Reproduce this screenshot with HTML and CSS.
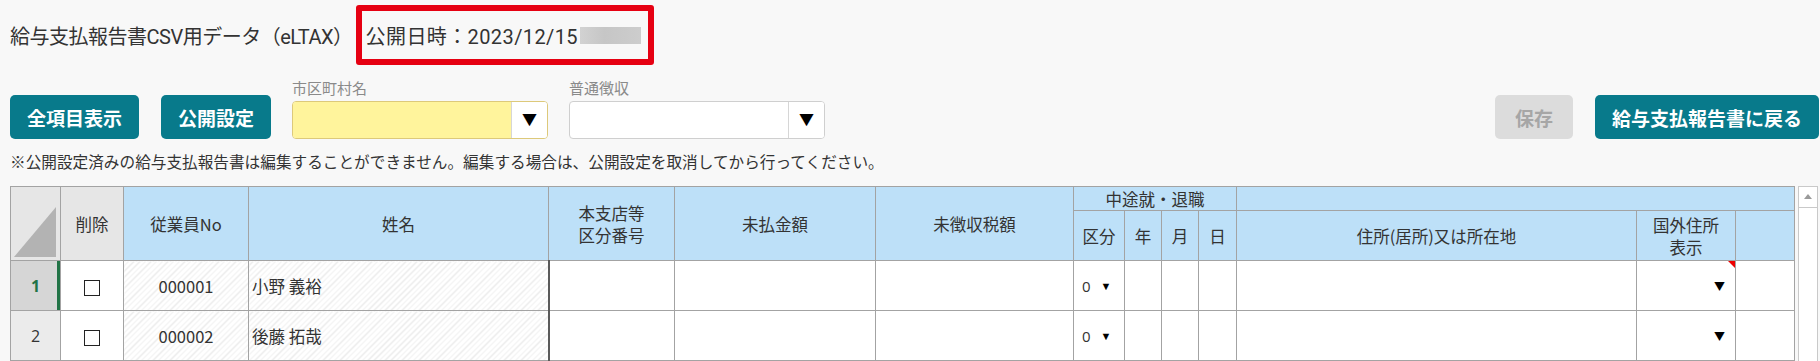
FILE: index.html
```html
<!DOCTYPE html>
<html lang="ja">
<head>
    <meta charset="UTF-8" />
    <title>給与支払報告書CSV用データ（eLTAX）</title>
    <link rel="stylesheet" href="styles.css">
</head>
<body>
<div class="page">
    <header class="title-bar">
        <h1 class="title">給与支払報告書CSV用データ（eLTAX）</h1>
        <span class="date-box">公開日時：2023/12/15<span class="masked"></span></span>
    </header>

    <div class="toolbar">
        <button class="btn">全項目表示</button>
        <button class="btn">公開設定</button>
        <div class="field">
            <span class="field-label">市区町村名</span>
            <span class="select select-required"><span class="select-value"></span><span class="select-arrow">▼</span></span>
        </div>
        <div class="field">
            <span class="field-label">普通徴収</span>
            <span class="select"><span class="select-value"></span><span class="select-arrow">▼</span></span>
        </div>
        <div class="toolbar-right">
            <button class="btn btn-disabled">保存</button>
            <button class="btn">給与支払報告書に戻る</button>
        </div>
    </div>

    <p class="note">※公開設定済みの給与支払報告書は編集することができません。編集する場合は、公開設定を取消してから行ってください。</p>

    <div class="grid-wrap">
        <table class="grid">
            <colgroup>
                <col style="width:50px">
                <col style="width:63px">
                <col style="width:125px">
                <col style="width:300px">
                <col style="width:126px">
                <col style="width:201px">
                <col style="width:198px">
                <col style="width:51px">
                <col style="width:37px">
                <col style="width:37px">
                <col style="width:38px">
                <col style="width:400px">
                <col style="width:99px">
                <col style="width:59px">
            </colgroup>
            <thead>
                <tr class="head-top">
                    <th class="corner" rowspan="2"><span class="corner-mark"></span></th>
                    <th class="head-gray" rowspan="2">削除</th>
                    <th rowspan="2">従業員No</th>
                    <th rowspan="2">姓名</th>
                    <th rowspan="2">本支店等<br>区分番号</th>
                    <th rowspan="2">未払金額</th>
                    <th rowspan="2">未徴収税額</th>
                    <th colspan="4">中途就・退職</th>
                    <th colspan="3"></th>
                </tr>
                <tr class="head-bottom">
                    <th>区分</th>
                    <th>年</th>
                    <th>月</th>
                    <th>日</th>
                    <th>住所(居所)又は所在地</th>
                    <th>国外住所<br>表示</th>
                    <th></th>
                </tr>
            </thead>
            <tbody>
                <tr>
                    <td class="row-head row-head-active">1</td>
                    <td class="center"><span class="checkbox"></span></td>
                    <td class="center readonly">000001</td>
                    <td class="readonly name-cell">小野 義裕</td>
                    <td></td>
                    <td></td>
                    <td></td>
                    <td class="kubun">0 <span class="mini-arrow">▼</span></td>
                    <td></td>
                    <td></td>
                    <td></td>
                    <td></td>
                    <td class="pick"><span class="comment-mark"></span><span class="mini-arrow">▼</span></td>
                    <td></td>
                </tr>
                <tr>
                    <td class="row-head">2</td>
                    <td class="center"><span class="checkbox"></span></td>
                    <td class="center readonly">000002</td>
                    <td class="readonly name-cell">後藤 拓哉</td>
                    <td></td>
                    <td></td>
                    <td></td>
                    <td class="kubun">0 <span class="mini-arrow">▼</span></td>
                    <td></td>
                    <td></td>
                    <td></td>
                    <td></td>
                    <td class="pick"><span class="mini-arrow">▼</span></td>
                    <td></td>
                </tr>
            </tbody>
        </table>
        <div class="scrollbar"><span class="scroll-up"></span></div>
    </div>
</div>
</body>
</html>
```

FILE: styles.css
```css
:root {
    --teal: #087a8b;
    --head-blue: #bde0f8;
    --grid-line: #a3a3a3;
    --text: #333;
    --muted: #8a8a8a;
    --bg: #f8f8f8;
}

body {
    margin: 0;
    background: var(--bg);
    color: var(--text);
    font-family: Roboto, "Noto Sans CJK JP", sans-serif;
}

.page {
    padding: 5px 1px 0 10px;
}

/* title */
.title-bar {
    display: flex;
    align-items: center;
    height: 60px;
}

.title {
    margin: 0 3px 0 0;
    font-size: 20px;
    font-weight: 400;
    letter-spacing: -0.5px;
    color: #333;
}

.date-box {
    display: inline-flex;
    align-items: center;
    box-sizing: border-box;
    height: 60px;
    padding: 0 7px 0 4px;
    border: 6px solid #e60012;
    border-radius: 3px;
    font-size: 20px;
    letter-spacing: 0.4px;
}

.masked {
    display: inline-block;
    width: 61px;
    height: 17px;
    margin-left: 2px;
    background: linear-gradient(90deg, #d2d2d2, #c6c6c6 40%, #cdcdcd);
}

/* toolbar */
.toolbar {
    display: flex;
    align-items: flex-end;
    gap: 21px;
    margin-top: 18px;
}

.btn {
    height: 44px;
    padding: 0 17px;
    border: none;
    border-radius: 5px;
    background: var(--teal);
    color: #fff;
    font-family: "Noto Sans CJK JP", sans-serif;
    font-size: 19px;
    font-weight: 700;
    cursor: pointer;
}

.btn + .btn {
    margin-left: 1px;
}

.btn-disabled {
    padding: 0 20px;
    background: #dcdcdc;
    color: #a6a6a6;
    cursor: default;
}

.field {
    display: flex;
    flex-direction: column;
}

.field-label {
    height: 18px;
    font-family: "Noto Sans CJK JP", sans-serif;
    font-size: 15px;
    line-height: 10px;
    color: var(--muted);
}

.select {
    display: flex;
    box-sizing: border-box;
    width: 256px;
    height: 38px;
    border: 1px solid #cfcfcf;
    border-radius: 4px;
    background: #fff;
    overflow: hidden;
}

.select-required {
    border-color: #ddc97a;
}

.select-required .select-value {
    background: #fff49c;
}

.select-value {
    flex: 1;
}

.select-arrow {
    width: 35px;
    border-left: 1px solid #d6d6d6;
    background: #fff;
    color: #000;
    font-size: 15px;
    line-height: 36px;
    text-align: center;
}

.toolbar-right {
    display: flex;
    gap: 21px;
    margin-left: auto;
}

.note {
    margin: 13px 0 14px;
    font-family: "Noto Sans CJK JP", sans-serif;
    font-size: 15.65px;
    line-height: 20px;
    color: #333;
}

/* grid */
.grid-wrap {
    display: flex;
    align-items: flex-start;
}

.grid {
    width: 1784px;
    table-layout: fixed;
    border-collapse: collapse;
    background: #fff;
    font-family: "Noto Sans CJK JP", sans-serif;
    font-size: 16.5px;
    color: #333;
}

.grid th,
.grid td {
    border: 1px solid var(--grid-line);
    padding: 0;
}

.grid th {
    background: var(--head-blue);
    font-weight: 400;
    line-height: 22px;
    text-align: center;
}

.head-top {
    height: 24px;
}

.head-bottom {
    height: 50px;
}

.grid .corner {
    position: relative;
    background: #e6e6e6;
}

.corner-mark {
    position: absolute;
    right: 4px;
    bottom: 3px;
    width: 42px;
    height: 50px;
    background: #b3b3b3;
    clip-path: polygon(100% 0, 100% 100%, 0 100%);
}

.grid .head-gray {
    background: #e6e6e6;
}

.grid tbody tr {
    height: 50px;
}

.row-head {
    background: #ebebeb;
    text-align: center;
    font-family: "Open Sans", sans-serif;
    font-size: 16px;
}

.row-head-active {
    background: #d6d6d6;
    color: #217346;
    font-weight: 700;
    box-shadow: inset -3px 0 0 #217346;
}

.center {
    text-align: center;
}

.readonly {
    background: repeating-linear-gradient(-45deg, #fff 0 3px, #ebebeb 3px 4px);
}

.grid td.name-cell {
    padding-left: 3px;
    border-right: 2px solid #5a5a5a;
}

.checkbox {
    display: inline-block;
    width: 14px;
    height: 14px;
    border: 1px solid #222;
    background: #fff;
    vertical-align: middle;
}

.grid td.kubun {
    padding-left: 8px;
    font-family: "Open Sans", sans-serif;
    font-size: 15px;
}

.mini-arrow {
    margin-left: 6px;
    color: #000;
    font-size: 11px;
    vertical-align: 2px;
}

.grid td.pick {
    position: relative;
    padding-right: 10px;
    text-align: right;
}

.comment-mark {
    position: absolute;
    top: 0;
    right: 0;
    width: 0;
    height: 0;
    border-top: 7px solid #e00;
    border-left: 7px solid transparent;
}

.scrollbar {
    box-sizing: border-box;
    width: 20px;
    height: 180px;
    margin-left: 3px;
    border: 1px solid #c9c9c9;
    background: #fff;
}

.scroll-up {
    display: block;
    height: 20px;
    border-bottom: 1px solid #c9c9c9;
    position: relative;
}

.scroll-up::after {
    content: "";
    position: absolute;
    left: 5px;
    top: 7px;
    border-left: 4px solid transparent;
    border-right: 4px solid transparent;
    border-bottom: 5px solid #9a9a9a;
}
```
